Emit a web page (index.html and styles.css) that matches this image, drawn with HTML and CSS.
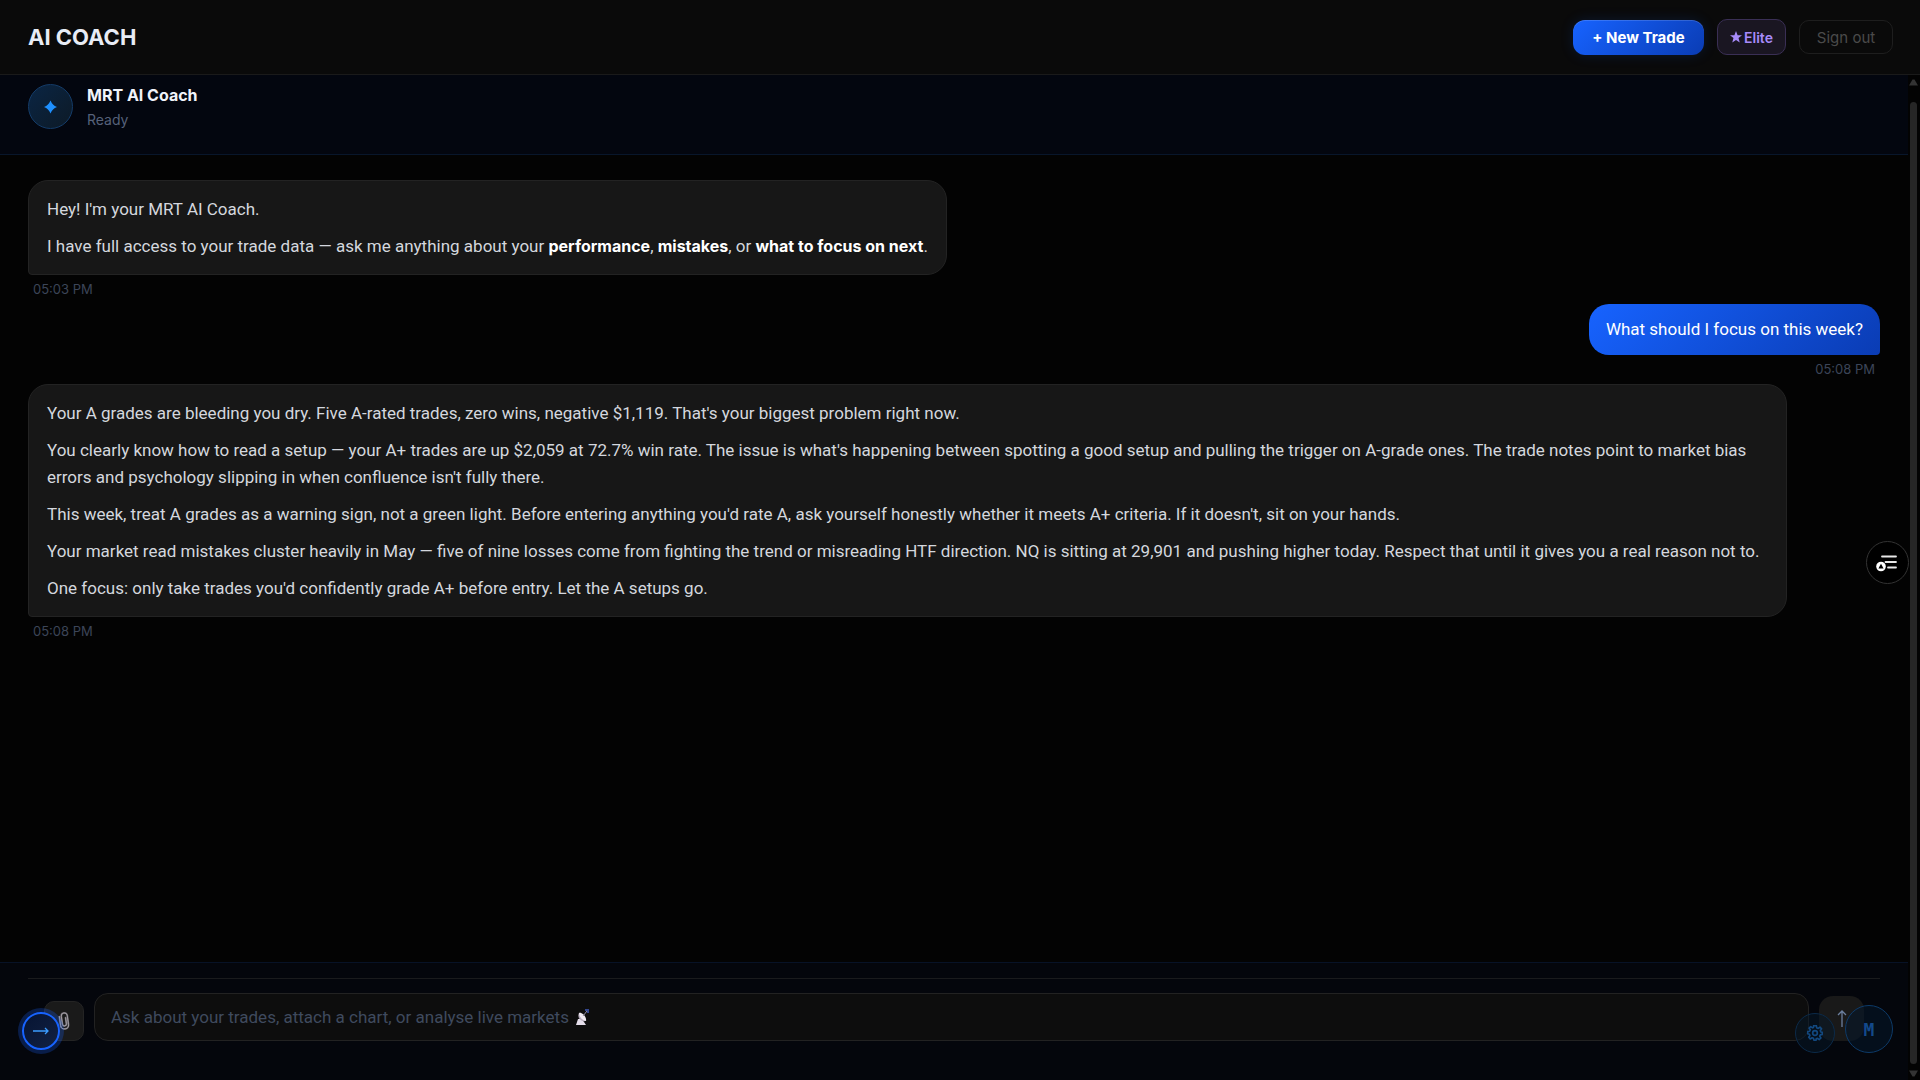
FILE: index.html
```
<!DOCTYPE html>
<html lang="en">
<head>
    <meta charset="UTF-8">
    <meta name="viewport" content="width=device-width, initial-scale=1.0">
    <title>AI Coach</title>
    <link rel="stylesheet" href="styles.css">
</head>
<body>

    <!-- Top bar -->
    <header class="topbar">
        <h1>AI COACH</h1>
        <div class="topbar-actions">
            <button type="button" class="btn-new">+ New Trade</button>
            <button type="button" class="btn-elite">
                <svg width="12" height="12" viewBox="0 0 24 24" aria-hidden="true"><path d="M12 0l3.200 8.500H24l-7 5.600L19.500 23 12 18l-7.500 5L7 14.100 0 8.500h8.800z" fill="currentColor"/></svg>
                Elite
            </button>
            <button type="button" class="btn-signout">Sign out</button>
        </div>
    </header>

    <div class="page">
        <main class="coach">

            <div class="coach-header">
                <div class="avatar">
                    <svg width="13" height="14" viewBox="0 0 14 14" aria-hidden="true"><path d="M7 0Q9 5 14 7Q9 9 7 14Q5 9 0 7Q5 5 7 0z" fill="#1e90ff"/></svg>
                </div>
                <div>
                    <h2>MRT AI Coach</h2>
                    <p class="status">Ready</p>
                </div>
            </div>

            <!-- Messages -->
            <div class="messages">
                <div class="message">
                    <div class="bubble">
                        <p>Hey! I'm your MRT AI Coach.</p>
                        <p>I have full access to your trade data — ask me anything about your <strong>performance</strong>, <strong>mistakes</strong>, or <strong>what to focus on next</strong>.</p>
                    </div>
                    <time>05:03 PM</time>
                </div>

                <div class="message user">
                    <div class="bubble">
                        <p>What should I focus on this week?</p>
                    </div>
                    <time>05:08 PM</time>
                </div>

                <div class="message">
                    <div class="bubble">
                        <p>Your A grades are bleeding you dry. Five A-rated trades, zero wins, negative $1,119. That's your biggest problem right now.</p>
                        <p>You clearly know how to read a setup — your A+ trades are up $2,059 at 72.7% win rate. The issue is what's happening between spotting a good setup and pulling the trigger on A-grade ones. The trade notes point to market bias errors and psychology slipping in when confluence isn't fully there.</p>
                        <p>This week, treat A grades as a warning sign, not a green light. Before entering anything you'd rate A, ask yourself honestly whether it meets A+ criteria. If it doesn't, sit on your hands.</p>
                        <p>Your market read mistakes cluster heavily in May — five of nine losses come from fighting the trend or misreading HTF direction. NQ is sitting at 29,901 and pushing higher today. Respect that until it gives you a real reason not to.</p>
                        <p>One focus: only take trades you'd confidently grade A+ before entry. Let the A setups go.</p>
                    </div>
                    <time>05:08 PM</time>
                </div>
            </div>

            <!-- Message box -->
            <footer class="composer">
                <form class="composer-row">
                    <button type="button" class="btn-attach" aria-label="Attach a chart">
                        <svg width="12" height="20" viewBox="0 0 12 20" fill="none" stroke-linecap="round" aria-hidden="true">
                            <path d="M2 5v9a4 4 0 0 0 8 0V5a3 3 0 0 0-6 0v8a2 2 0 0 0 4 0V7" stroke="#6b676e" stroke-width="1.800" transform="rotate(-8 6 10)"/>
                            <path d="M2 5v9a4 4 0 0 0 8 0V5a3 3 0 0 0-6 0v8a2 2 0 0 0 4 0V7" stroke="#b4b0b6" stroke-width="0.700" transform="rotate(-8 6 10)"/>
                        </svg>
                    </button>
                    <div class="field">
                        <input type="text" aria-label="Message" placeholder="Ask about your trades, attach a chart, or analyse live markets">
                        <svg class="dish" width="16" height="18" viewBox="0 0 16 18" aria-hidden="true">
                            <path d="M1 17l2-6h4l4 6z" fill="#e4ddea"/>
                            <path d="M4 5c-2 4 1 9 7 8z" fill="#b7adbd"/>
                            <path d="M4 5c3-1 8 4 7 8-3 0-7-4-7-8z" fill="#f0eaf2"/>
                            <path d="M8 8l4-5" stroke="#9a93a8" stroke-width="1"/>
                            <path d="M10 1h4v4h-2V3h-2z" fill="#33468c"/>
                        </svg>
                    </div>
                    <button type="submit" class="btn-send" aria-label="Send">
                        <svg width="10" height="18" viewBox="0 0 10 18" fill="none" stroke="#6c7f9e" stroke-width="1.300" aria-hidden="true"><path d="M5 17V1M1 5l4-4 4 4"/></svg>
                    </button>
                </form>
            </footer>
        </main>

        <div class="scrollbar" aria-hidden="true">
            <svg width="9" height="7" viewBox="0 0 9 7"><path d="M3.500 0.500h2L9 6.500H0z" fill="#333"/></svg>
            <div class="thumb"></div>
            <svg width="9" height="7" viewBox="0 0 9 7"><path d="M3.500 6.500h2L9 0.500H0z" fill="#333"/></svg>
        </div>
    </div>

    <!-- Floating buttons -->
    <button type="button" class="float float-menu" aria-label="Open menu">
        <svg width="16" height="8" viewBox="0 0 16 8" fill="none" stroke="#3b9cff" stroke-width="1.300" aria-hidden="true"><path d="M0 4h15M12 1l3 3-3 3"/></svg>
    </button>

    <button type="button" class="float float-list" aria-label="Reading list">
        <svg width="24" height="18" viewBox="0 0 24 18" aria-hidden="true">
            <path d="M6 2.500h14M9.500 8h10.500M12 13.500h8" stroke="#e8e8e8" stroke-width="1.800" stroke-linecap="round"/>
            <circle cx="5" cy="12.500" r="4.800" fill="#fff"/>
            <path d="M5 9.800l2.600 4.700H2.400z" fill="#000"/>
        </svg>
    </button>

    <div class="float-group">
        <button type="button" class="float float-settings" aria-label="Settings">
            <svg width="16" height="16" viewBox="0 0 24 24" fill="none" stroke="#12487f" stroke-width="2.500" stroke-linejoin="round" aria-hidden="true">
                <path d="M10 1h4l.6 3.200 2.200.9L19.500 3.200l2.300 2.600-1.900 2.700.9 2L23 11v3l-3 .8-.9 2 1.800 2.700-2.600 2.300-2.500-1.800-2 .8L13.500 23h-3l-.9-3-2-.9-2.800 1.800L2.600 18.400l1.800-2.600-.8-2L1 13v-3l3-.6.9-2.200L3.200 4.800l2.400-2.300 2.700 1.800 1.300-.6z"/>
                <circle cx="12" cy="12" r="3.500"/>
            </svg>
        </button>
        <button type="button" class="float float-m">M</button>
    </div>

</body>
</html>
```
FILE: styles.css
```
* {
    box-sizing: border-box;
}

body {
    margin: 0;
    height: 100vh;
    display: flex;
    flex-direction: column;
    overflow: hidden;
    background-color: #030303;
    color: #d4d7de;
    font-family: Inter, "Liberation Sans", sans-serif;
    font-size: 17px;
    line-height: 27px;
}

h1, h2, p {
    margin: 0;
}

button, input {
    font-family: inherit;
    margin: 0;
}

button {
    display: flex;
    align-items: center;
    justify-content: center;
    padding: 0;
    cursor: pointer;
}

/* Top bar */
.topbar {
    flex: none;
    height: 75px;
    padding: 0 27px 0 28px;
    display: flex;
    align-items: center;
    justify-content: space-between;
    background-color: #0a0a0a;
    border-bottom: 1px solid #1a1a1a;
}

.topbar h1 {
    font-size: 22px;
    font-weight: 700;
    color: #e8ecf5;
}

.topbar-actions {
    display: flex;
    align-items: center;
    gap: 13px;
}

.btn-new {
    width: 131px;
    height: 35px;
    border: none;
    border-radius: 12px;
    background: linear-gradient(135deg, #1763ff, #0a3cb4);
    box-shadow: 0 0 14px rgba(23, 99, 255, 0.15), inset 0 1px 0 rgba(255, 255, 255, 0.15);
    color: #fff;
    font-size: 15px;
    font-weight: 700;
}

.btn-elite {
    width: 69px;
    height: 36px;
    gap: 2px;
    border: 1px solid #3a2f55;
    border-radius: 10px;
    background-color: #1a1622;
    color: #a78bfa;
    font-size: 14px;
    font-weight: 600;
}

.btn-signout {
    width: 94px;
    height: 34px;
    border: 1px solid #1e1e1e;
    border-radius: 10px;
    background: none;
    color: #4a4a4a;
    font-size: 15px;
}

/* Page and scrollbar */
.page {
    flex: 1;
    min-height: 0;
    display: flex;
}

.coach {
    flex: 1;
    min-width: 0;
    display: flex;
    flex-direction: column;
}

.scrollbar {
    flex: none;
    width: 12px;
    padding: 4px 2px 3px 0;
    display: flex;
    flex-direction: column;
    align-items: center;
    background-color: #030303;
}

.thumb {
    flex: 1;
    width: 7px;
    margin: 16px 0 6px;
    border-radius: 4px;
    background-color: #262626;
}

/* Coach header */
.coach-header {
    height: 80px;
    padding: 9px 28px 0;
    display: flex;
    align-items: flex-start;
    gap: 14px;
    background-color: #03060f;
    border-bottom: 1px solid #08162b;
}

.avatar {
    width: 45px;
    height: 45px;
    display: flex;
    align-items: center;
    justify-content: center;
    border: 1px solid #143c69;
    border-radius: 50%;
    background: linear-gradient(135deg, #0a2544, #0d1a26);
}

.coach-header h2 {
    margin-bottom: 2px;
    font-size: 16px;
    line-height: 22px;
    font-weight: 700;
    color: #f0f3fa;
}

.status {
    font-size: 14px;
    line-height: 24px;
    color: #56617a;
}

/* Messages */
.messages {
    flex: 1;
    padding: 25px 28px;
    display: flex;
    flex-direction: column;
    gap: 6px;
}

.message {
    display: flex;
    flex-direction: column;
    align-items: flex-start;
}

.bubble {
    max-width: 95%;
    padding: 15px 18px 14px;
    display: flex;
    flex-direction: column;
    gap: 10px;
    background-color: #171717;
    border: 1px solid #232323;
    border-radius: 20px 20px 20px 4px;
    font-family: Roboto, sans-serif;
}

.bubble strong {
    font-family: Inter, sans-serif;
    font-size: 16px;
    line-height: 1;
    font-weight: 700;
    color: #fff;
}

.message time {
    padding: 5px 5px 0;
    font-size: 13px;
    line-height: 18px;
    color: #3c4558;
}

.user {
    align-items: flex-end;
}

.user .bubble {
    padding: 12px 17px;
    border: none;
    border-radius: 20px 20px 4px 20px;
    background: linear-gradient(135deg, #1763ff, #0a3cb4);
    color: #fff;
}

/* Message box */
.composer {
    height: 118px;
    padding: 15px 28px 0;
    background-color: #04060c;
    border-top: 1px solid #071226;
}

.composer-row {
    padding: 14px 16px 0;
    display: flex;
    align-items: flex-end;
    gap: 10px;
    border-top: 1px solid #1a1b1d;
}

.btn-attach {
    width: 40px;
    height: 40px;
    border: 1px solid #242424;
    border-radius: 10px;
    background-color: #1a1a1a;
}

.field {
    flex: 1;
    position: relative;
}

.field input {
    display: block;
    width: 100%;
    height: 48px;
    padding: 0 16px;
    border: 1px solid #222;
    border-radius: 14px;
    outline: none;
    background-color: #0d0d0d;
    color: #d4d7de;
    font-family: Roboto, sans-serif;
    font-size: 17px;
}

.field input::placeholder {
    color: #3f4a5e;
    opacity: 1;
}

.dish {
    position: absolute;
    left: 481px;
    top: 15px;
}

.btn-send {
    width: 45px;
    height: 45px;
    border: none;
    border-radius: 14px;
    background-color: #191919;
}

/* Floating buttons */
.float {
    border-radius: 50%;
}

.float-menu {
    position: absolute;
    left: 22px;
    bottom: 30px;
    width: 38px;
    height: 38px;
    border: 2px solid #1763ff;
    background: linear-gradient(135deg, #061433, #122142);
    box-shadow: 0 0 0 4px rgba(23, 99, 255, 0.25);
}

.float-list {
    position: absolute;
    right: 11px;
    top: 541px;
    width: 43px;
    height: 43px;
    border: 1px solid #333;
    background-color: #000;
}

.float-group {
    position: absolute;
    right: 27px;
    bottom: 27px;
    display: flex;
    align-items: flex-end;
    gap: 10px;
}

.float-settings {
    width: 40px;
    height: 40px;
    border: 1px solid #0b2a49;
    background-color: rgba(6, 24, 40, 0.5);
}

.float-m {
    width: 48px;
    height: 48px;
    border: 1px solid #0d3a68;
    background-color: rgba(5, 22, 40, 0.6);
    color: #13498a;
    font-family: "DejaVu Sans Mono", monospace;
    font-size: 18px;
    font-weight: 700;
}
```
